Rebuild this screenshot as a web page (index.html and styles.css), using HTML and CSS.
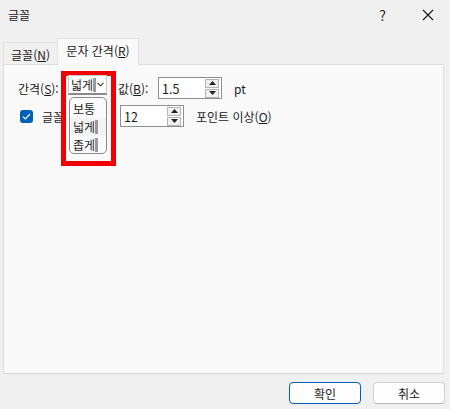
FILE: index.html
```html
<!DOCTYPE html>
<html lang="ko">
<head>
<meta charset="utf-8">
<title>글꼴</title>
<link rel="stylesheet" href="styles.css">
</head>
<body>
<div class="titlebar">
  <span class="title">글꼴</span>
  <span class="help">?</span>
  <span class="close"><svg width="12" height="12" viewBox="0 0 12 12"><path d="M1 1L11 11M11 1L1 11" stroke="#1b1b1b" stroke-width="1.2" fill="none"/></svg></span>
</div>
<div class="tabs">
  <div class="tab tab-inactive">글꼴(<u>N</u>)</div>
  <div class="tab tab-active">문자 간격(<u>R</u>)</div>
</div>
<div class="panel">
  <div class="row row1">
    <span class="label lbl-spacing">간격(<u>S</u>):</span>
    <div class="combo-wrap">
      <div class="frame"></div>
      <div class="combo"><span class="combo-text">넓게</span><span class="mark"></span><svg class="chev" width="7" height="5" viewBox="0 0 7 5"><path d="M0.5 0.8L3.5 3.8L6.5 0.8" stroke="#333" stroke-width="1.1" fill="none"/></svg></div>
      <div class="list">
        <div class="item">보통</div>
        <div class="item item-sel">넓게<span class="mark"></span></div>
        <div class="item">좁게<span class="mark"></span></div>
      </div>
    </div>
    <span class="label lbl-value">값(<u>B</u>):</span>
    <div class="spin"><span class="spin-text">1.5</span><div class="spin-btns"><div class="sb"><svg width="7" height="4" viewBox="0 0 7 4"><path d="M3.5 0L7 4H0Z" fill="#222"/></svg></div><div class="sb"><svg width="7" height="4" viewBox="0 0 7 4"><path d="M0 0H7L3.5 4Z" fill="#222"/></svg></div></div></div>
    <span class="unit">pt</span>
  </div>
  <div class="row row2">
    <span class="check"><svg width="9" height="7" viewBox="0 0 9 7"><path d="M1 3.6L3.4 6L8 1" stroke="#fff" stroke-width="1.2" fill="none"/></svg></span>
    <span class="lbl-size"><span class="lbl-size-text">글꼴 크기(<u>Z</u>):</span></span>
    <div class="spin"><span class="spin-text">12</span><div class="spin-btns"><div class="sb"><svg width="7" height="4" viewBox="0 0 7 4"><path d="M3.5 0L7 4H0Z" fill="#222"/></svg></div><div class="sb"><svg width="7" height="4" viewBox="0 0 7 4"><path d="M0 0H7L3.5 4Z" fill="#222"/></svg></div></div></div>
    <span class="unit">포인트 이상(<u>O</u>)</span>
  </div>
</div>
<div class="footer">
  <button class="btn btn-ok">확인</button>
  <button class="btn">취소</button>
</div>
</body>
</html>
```
FILE: styles.css
```css
* { box-sizing: border-box; }
html, body { margin: 0; padding: 0; }
body {
  width: 450px;
  height: 409px;
  overflow: hidden;
  background: #f0f0f0;
  font-family: "Noto Sans CJK KR", "Noto Sans", sans-serif;
  font-size: 12px;
  color: #1b1b1b;
  display: flex;
  flex-direction: column;
}
u { text-decoration: underline; text-underline-offset: 1px; }
.titlebar {
  height: 29px;
  display: flex;
  align-items: center;
  padding-left: 8px;
  flex-shrink: 0;
}
.title { flex: 1; }
.help { font-size: 14px; width: 45px; text-align: center; margin-right: 0; }
.close { width: 45px; display: flex; justify-content: center; align-items: center; }
.tabs {
  height: 35px;
  display: flex;
  align-items: flex-end;
  padding-left: 3px;
  flex-shrink: 0;
}
.tab {
  display: flex;
  align-items: center;
  justify-content: center;
}
.tab-inactive {
  width: 54px;
  height: 22px;
  border: 1px solid #e3e3e3;
  border-bottom: none;
  border-right: none;
  background: #f0f0f0;
  padding-top: 1px;
}
.tab-active {
  width: 82px;
  height: 27px;
  margin-bottom: -1px;
  position: relative;
  z-index: 1;
  background: #f9f9f9;
  border: 1px solid #e0e0e0;
  border-bottom: none;
  padding-bottom: 4px;
}
.panel {
  height: 310px;
  margin-left: 3px;
  margin-right: 6px;
  background: #f9f9f9;
  border: 1px solid #dedede;
  border-bottom-color: #d4d4d4;
  padding: 12px 0 0 14px;
  flex-shrink: 0;
}
.row { display: flex; align-items: center; height: 22px; }
.row2 { margin-top: 6px; }
.label { white-space: nowrap; }
.lbl-spacing { width: 50px; }
.lbl-value { width: 40px; margin-left: 11px; }
.lbl-size {
  width: 24px;
  margin-left: 9px;
  margin-right: 54px;
  overflow: hidden;
  white-space: nowrap;
  flex-shrink: 0;
}
.unit { margin-left: 12px; white-space: nowrap; }
.combo-wrap {
  position: relative;
  width: 39px;
  height: 20px;
  align-self: flex-start;
  margin-top: -2px;
  flex-shrink: 0;
}
.frame {
  position: absolute;
  left: -7px;
  top: -4px;
  width: 55px;
  height: 95px;
  border: 5px solid #f20000;
  background: #f9f9f9;
  z-index: 1;
}
.combo {
  position: relative;
  z-index: 2;
  width: 39px;
  height: 20px;
  background: #fdfdfd;
  border: 1px solid #c8c8c8;
  border-bottom: 2px solid #8a8a8a;
  display: flex;
  align-items: center;
  padding-left: 2px;
  white-space: nowrap;
  overflow: hidden;
}
.combo-text { line-height: 16px; flex-shrink: 0; }
.mark {
  display: inline-block;
  flex-shrink: 0;
  width: 3px;
  height: 14px;
  background: #9a9a9a;
  vertical-align: middle;
}
.chev { margin-left: 1px; flex-shrink: 0; }
.list {
  position: absolute;
  z-index: 2;
  left: 1px;
  top: 22px;
  width: 38px;
  height: 57px;
  background: #fbfbfb;
  border: 1px solid #8c8c8c;
  border-radius: 5px;
  padding-top: 2px;
}
.item {
  height: 18px;
  line-height: 16px;
  padding-left: 3px;
  display: flex;
  align-items: center;
  white-space: nowrap;
  overflow: hidden;
}
.item-sel { background: #f3f3f3; }
.spin {
  width: 64px;
  height: 22px;
  background: #ffffff;
  border: 1px solid #8f8f8f;
  display: flex;
  align-items: center;
  padding-left: 3px;
  flex-shrink: 0;
}
.spin-text { flex: 1; font-size: 12.5px; }
.spin-btns {
  display: flex;
  flex-direction: column;
  gap: 1px;
  margin-right: 2px;
}
.sb {
  width: 14px;
  height: 9px;
  background: #efefef;
  border: 1px solid #b4b4b4;
  display: flex;
  align-items: center;
  justify-content: center;
}
.check {
  width: 13px;
  height: 13px;
  border-radius: 3px;
  background: #005fb8;
  display: flex;
  align-items: center;
  justify-content: center;
  margin-left: 2px;
  flex-shrink: 0;
}
.footer {
  display: flex;
  justify-content: flex-end;
  gap: 12px;
  padding: 8px 5px 0 0;
}
.btn {
  width: 72px;
  height: 22px;
  font-family: inherit;
  font-size: 12px;
  color: #1b1b1b;
  background: #fdfdfd;
  border: 1px solid #d0d0d0;
  border-bottom-color: #b8b8b8;
  border-radius: 4px;
  padding: 0;
}
.btn-ok {
  border: 1px solid #005fb8;
  box-shadow: inset 0 0 0 1px #ffffff;
}
```
